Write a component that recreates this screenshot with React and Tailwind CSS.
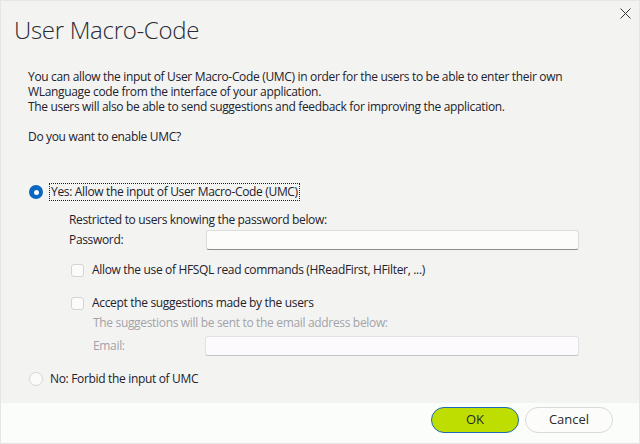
export default function App() {
  const font = { fontFamily: '"Open Sans", "Noto Sans", sans-serif' };
  return (
    <div
      className="w-[640px] h-[444px] bg-[#f3f4f2] flex flex-col text-[12px] tracking-[-0.33px] text-[#23212b] relative overflow-hidden border border-[#e6e7e5]"
      style={font}
    >
      <button className="absolute left-[618px] top-[6px] w-[12px] h-[12px] flex items-center justify-center">
        <svg width="11" height="11" viewBox="0 0 11 11">
          <path d="M0.5 0.5 L10.5 10.5 M10.5 0.5 L0.5 10.5" stroke="#333" strokeWidth="1" />
        </svg>
      </button>
      <div className="pl-[13px] pt-[13px] text-[24px] leading-[32px] font-light tracking-[-0.3px] text-[#2a2a33]">
        User Macro-Code
      </div>
      <div className="mt-[23px] pl-[27px] leading-[15px]">
        <div>You can allow the input of User Macro-Code (UMC) in order for the users to be able to enter their own</div>
        <div>WLanguage code from the interface of your application.</div>
        <div>The users will also be able to send suggestions and feedback for improving the application.</div>
        <div className="h-[15px]"></div>
        <div>Do you want to enable UMC?</div>
      </div>

      <div className="mt-[38px] h-[20px] flex items-center pl-[28px]">
        <span className="w-[14px] h-[14px] rounded-full bg-[#0a67c0] flex items-center justify-center">
          <span className="w-[5px] h-[5px] rounded-full bg-white"></span>
        </span>
        <span className="ml-[6px] h-[18px] px-[1px] flex items-center border border-dotted border-[#222]">
          Yes: Allow the input of User Macro-Code (UMC)
        </span>
      </div>

      <div className="mt-[10px] h-[16px] flex items-center pl-[68px]">
        Restricted to users knowing the password below:
      </div>
      <div className="mt-[2px] h-[20px] flex items-center pl-[68px]">
        <span className="w-[137px]">Password:</span>
        <div className="w-[373px] h-[20px] bg-[#fcfdfb] border border-[#dcdcdc] border-b-[#8c8c8c] rounded-[3px]"></div>
      </div>

      <div className="mt-[12px] h-[16px] flex items-center pl-[70px]">
        <span className="w-[13px] h-[13px] rounded-[3px] border border-[#d4d4d4] bg-[#fbfcfa]"></span>
        <span className="ml-[8px]">Allow the use of HFSQL read commands (HReadFirst, HFilter, ...)</span>
      </div>
      <div className="mt-[17px] h-[16px] flex items-center pl-[70px]">
        <span className="w-[13px] h-[13px] rounded-[3px] border border-[#d4d4d4] bg-[#fbfcfa]"></span>
        <span className="ml-[8px]">Accept the suggestions made by the users</span>
      </div>
      <div className="mt-[4px] h-[16px] flex items-center pl-[92px] text-[#a3a2a8]">
        The suggestions will be sent to the email address below:
      </div>
      <div className="mt-[5px] h-[20px] flex items-center pl-[92px] text-[#a3a2a8]">
        <span className="w-[112px]">Email:</span>
        <div className="w-[374px] h-[20px] bg-[#fcfafc] border border-[#e4e1e4] border-b-[#c4c4c4] rounded-[3px]"></div>
      </div>

      <div className="mt-[15px] h-[16px] flex items-center pl-[28px]">
        <span className="w-[14px] h-[14px] rounded-full border border-[#d6d6d6] bg-[#fbfcfa]"></span>
        <span className="ml-[7px]">No: Forbid the input of UMC</span>
      </div>

      <div className="flex-1"></div>
      <div className="h-[40px] bg-[#fbfdfa] flex items-start pt-[4px] pl-[430px] gap-[6px]">
        <button className="w-[88px] h-[26px] rounded-full bg-[#bedd00] border-[1.5px] border-[#2068b8] text-[13px] tracking-normal text-[#2a2a2a] flex items-center justify-center">
          OK
        </button>
        <button className="w-[88px] h-[26px] rounded-full bg-[#fcfdfb] border border-[#dadada] text-[13px] tracking-normal text-[#2a2a2a] flex items-center justify-center">
          Cancel
        </button>
      </div>
    </div>
  );
}
